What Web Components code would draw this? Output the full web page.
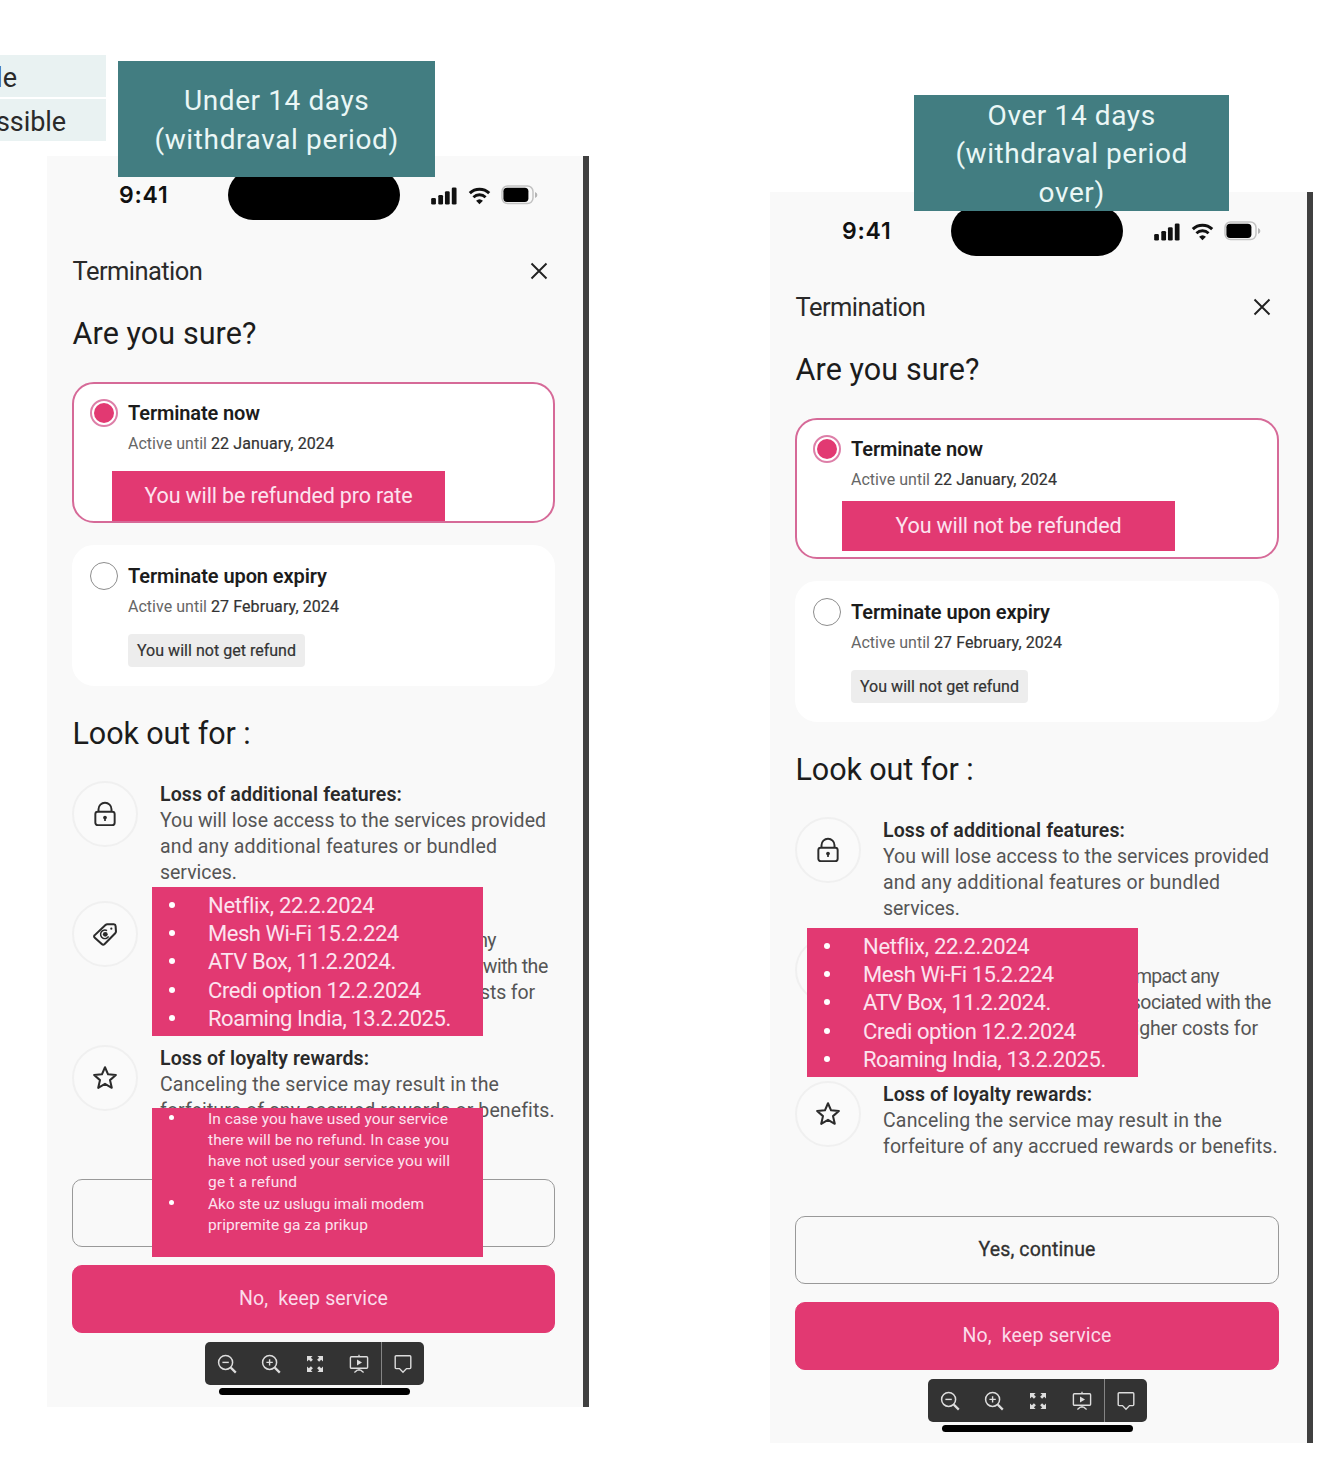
<!DOCTYPE html>
<html lang="en">
<head>
<meta charset="utf-8">
<title>Termination flow</title>
<style>
  html, body { margin: 0; background: #fff; }
  body { width: 1330px; height: 1464px; overflow: hidden; font-family: Roboto, "Liberation Sans", sans-serif; color: #222; }
</style>
</head>
<body>
<flow-board></flow-board>

<script>
const define = (name, html, setup) => {
  const tpl = document.createElement('template');
  tpl.innerHTML = html;
  customElements.define(name, class extends HTMLElement {
    constructor() {
      super();
      this.attachShadow({ mode: 'open' });
    }
    connectedCallback() {
      if (this.ready) return;
      this.ready = true;
      this.shadowRoot.append(document.importNode(tpl.content, true));
      if (setup) setup(this, this.shadowRoot);
    }
  });
};

/* One line of text tracked so that it fills the width in its "w" attribute. */
define('fit-line', `<style>:host { display: block; flex: none; } span { display: inline-block; vertical-align: top; white-space: pre; }</style><span><slot></slot></span>`, (el, root) => {
  const w = parseFloat(el.getAttribute('w'));
  const span = root.querySelector('span');
  const natural = span.getBoundingClientRect().width;
  const n = el.textContent.length;
  if (w && natural) {
    span.style.letterSpacing = ((w - natural) / (n - 0.5)).toFixed(3) + 'px';
    el.style.width = w + 'px';
  }
});

const ICONS = {
  close: ['0 0 20 20', '<path d="M2.5 2.5 17.5 17.5M17.5 2.5 2.5 17.5" stroke-width="1.9"/>'],
  lock: ['0 0 24 28', '<rect x="1.600" y="11.500" width="20.800" height="14.500" rx="2.600" stroke-width="2.100"/><path d="M5 11.500V8.800a7 7 0 0 1 14 0v2.700" stroke-width="2.100"/><circle cx="12" cy="17.800" r="2" fill="currentColor" stroke="none"/><path d="M12 18v3.600" stroke-width="1.800"/>'],
  tag: ['0 0 28 28', '<path d="M3 15.200 14.500 4.200q.9-.8 2-.8l7 .2q1.800.1 1.900 1.800l.4 5.800q0 1.100-.8 1.900L13.600 24.800q-1.600 1.500-3.100 0L3 18q-1.500-1.400 0-2.800z" stroke-width="2.200"/><path d="M16.200 10.400a4.600 4.600 0 1 0 1.700 6.200" stroke-width="1.600"/><circle cx="14.300" cy="14.400" r="2.600" fill="currentColor" stroke="none"/><circle cx="20.800" cy="8.300" r="1.200" fill="currentColor" stroke="none"/>'],
  star: ['0 0 28 28', '<path d="m14 2.400 3.300 7.600 8.400.8-6.300 5.500 1.900 8.300-7.300-4.400-7.300 4.400 1.900-8.300-6.300-5.500 8.400-.8z" stroke-width="2.200" stroke-linejoin="round"/>'],
  zoomout: ['0 0 20 20', '<circle cx="8.600" cy="8.400" r="7" stroke-width="1.500"/><path d="M5.400 8.400h6.400" stroke-width="1.400"/><path d="m13.800 13.600 5 5" stroke-width="2.200"/>'],
  zoomin: ['0 0 20 20', '<circle cx="8.600" cy="8.400" r="7" stroke-width="1.500"/><path d="M5.400 8.400h6.400M8.600 5.200v6.400" stroke-width="1.400"/><path d="m13.800 13.600 5 5" stroke-width="2.200"/>'],
  expand: ['0 0 20 20', '<g fill="currentColor" stroke="none"><path d="M2 2h5.600L5.900 3.700l2 2-2 2-2-2L2 7.400z"/><path d="M18 2v5.400l-1.800-1.700-2.100 2-2-2 2.100-2L12.400 2z"/><path d="M2 18v-5.400l1.900 1.700 2-2 2 2-2 2L7.600 18z"/><path d="M18 18h-5.600l1.800-1.700-2.100-2 2-2 2.100 2 1.800-1.700z"/></g>'],
  present: ['0 0 20 20', '<rect x="1.400" y="2.800" width="17.200" height="11.400" rx="1" stroke-width="1.400"/><path d="M10 .8v2M10 14.200v2M5.400 18.600l2.800-2.400h3.600l2.800 2.400" stroke-width="1.300"/><path d="m8 5.600 5 3-5 3z" fill="currentColor" stroke="none"/>'],
  comment: ['0 0 20 20', '<path d="M3.200 1.800h13.600q1 0 1 1v10.800q0 1-1 1h-3.300L10 18.300l-3.500-3.700H3.200q-1 0-1-1V2.800q0-1 1-1z" stroke-width="1.400"/>'],
  signal: ['0 0 28 20', '<g fill="currentColor" stroke="none"><rect x="0.500" y="12.500" width="5" height="7" rx="1.400"/><rect x="8" y="9.500" width="5" height="10" rx="1.400"/><rect x="15" y="5.500" width="5" height="14" rx="1.400"/><rect x="22.200" y="1.500" width="5" height="18" rx="1.400"/></g>'],
  wifi: ['0 0 24 20', '<path d="M1.800 7.400a14.800 14.800 0 0 1 20.400 0" stroke-width="3.200"/><path d="M5.600 11.800a9.200 9.200 0 0 1 12.800 0" stroke-width="2.900"/><path d="M12 19.300 8.400 15.500a5.300 5.300 0 0 1 7.200 0z" fill="currentColor" stroke="none"/>'],
  battery: ['0 0 37 20', '<rect x="1" y="1" width="31" height="17.600" rx="5.500" stroke="#c2c2c2" stroke-width="1.500"/><rect x="2.400" y="2.700" width="25" height="14.200" rx="3.600" fill="currentColor" stroke="none"/><path d="M34 7v6q2.400-1 2.400-3T34 7z" fill="#b5b5b5" stroke="none"/>']
};
define('ui-icon', `<style>:host{display:block;flex:none}svg{display:block;width:100%;height:100%;fill:none;stroke:currentColor}</style>`, (el, root) => {
  const [box, body] = ICONS[el.getAttribute('name')];
  const t = document.createElement('template');
  t.innerHTML = `<svg viewBox="${box}" aria-hidden="true">${body}</svg>`;
  root.append(t.content);
});

define('status-bar', `
<style>
  :host { display: flex; height: 78px; align-items: center; color: #111; }
  .time { margin-left: 72px; width: 109px; font: 600 23px/28px Inter, sans-serif; }
  .island { width: 172px; height: 50px; border-radius: 25px; background: #000; }
  .icons { margin-left: 30px; display: flex; align-items: center; }
  .s { width: 28px; height: 19px; } .w { width: 25px; height: 19px; margin-left: 9px; } .b { width: 37px; height: 20px; margin-left: 9px; color: #000; }
</style>
<div class="time"><fit-line w="49">9:41</fit-line></div><div class="island"></div>
<div class="icons"><ui-icon class="s" name="signal"></ui-icon><ui-icon class="w" name="wifi"></ui-icon><ui-icon class="b" name="battery"></ui-icon></div>`);

define('option-card', `
<style>
  :host { display: flex; box-sizing: border-box; height: 141px; padding: 15px 15px 0 16px; border: 2px solid #fff; border-radius: 22px; background: #fff; }
  :host([checked]) { border-color: #d66a98; }
  .radio { flex: none; box-sizing: border-box; width: 28px; height: 28px; border: 1.500px solid #8d8d8d; border-radius: 50%; display: grid; place-items: center; }
  :host([checked]) .radio { border: 2px solid #dd7fa8; }
  :host([checked]) .radio::after { content: ""; width: 20px; height: 20px; border-radius: 50%; background: #e23972; }
  .body { margin-left: 10px; display: flex; flex-direction: column; align-items: flex-start; }
  .title { font: 600 20px/28px Roboto, sans-serif; color: #1c1c1c; }
  .sub { display: flex; gap: 4px; margin-top: 5px; font: 400 16px/24px Roboto, sans-serif; color: #666; }
  .date { color: #333; -webkit-text-stroke: .2px #333; }
</style>
<div class="radio"></div>
<div class="body"><div class="title"><slot name="title"></slot></div>
<div class="sub"><fit-line w="79">Active until</fit-line><span class="date"><slot name="date"></slot></span></div><slot></slot></div>`);

define('info-chip', `
<style>:host { display: block; box-sizing: border-box; height: 33px; width: 177px; padding-left: 9px; margin-top: 15px; border-radius: 4px; background: #ededed; font: 400 16px/34px Roboto, sans-serif; color: #333; -webkit-text-stroke: .2px #333; }</style><slot></slot>`);

define('feature-row', `
<style>
  :host { display: flex; width: 483px; }
  .disc { flex: none; box-sizing: border-box; width: 66px; height: 66px; border: 2px solid #f0f0f0; border-radius: 50%; display: grid; place-items: center; color: #2b2b2b; background: #fafafa; }
  ui-icon { width: 26px; height: 26px; }
  .text { margin-left: 22px; padding-top: 1px; display: flex; flex-direction: column; align-items: flex-start; font: 400 19.500px/26px Roboto, sans-serif; color: #555; white-space: nowrap; }
  .title { font-weight: 600; color: #2a2a2a; height: 26px; }
</style>
<div class="disc"></div><div class="text"><div class="title"><slot name="title"></slot></div><slot></slot></div>`, (el, root) => {
  const icon = document.createElement('ui-icon');
  icon.setAttribute('name', el.getAttribute('icon'));
  root.querySelector('.disc').append(icon);
});

define('action-button', `
<style>
  :host { display: flex; box-sizing: border-box; height: 68px; align-items: center; justify-content: center; border: 1.500px solid #999; border-radius: 10px; font: 400 19.500px/26px Roboto, sans-serif; color: #303030; -webkit-text-stroke: .3px currentColor; }
  :host([primary]) { background: #e23972; border-color: #e23972; color: #fbdcea; -webkit-text-stroke: 0; }
</style><slot></slot>`);

define('viewer-toolbar', `
<style>
  :host { display: flex; width: 219px; height: 43px; border-radius: 5px; background: #333; color: #ddd; }
  div { width: 44px; display: grid; place-items: center; }
  .last { box-sizing: border-box; width: 43px; border-left: 1px solid #858585; }
  ui-icon { width: 20px; height: 20px; }
</style>
<div><ui-icon name="zoomout"></ui-icon></div><div><ui-icon name="zoomin"></ui-icon></div><div><ui-icon name="expand"></ui-icon></div><div><ui-icon name="present"></ui-icon></div><div class="last"><ui-icon name="comment"></ui-icon></div>`);

/* Slide annotations that are laid over the screens. */
define('teal-label', `
<style>:host { position: absolute; z-index: 3; box-sizing: border-box; height: 116px; padding-top: 3px; display: flex; flex-direction: column; align-items: center; justify-content: center; background: #427d81; color: #eaf7f6; font: 400 28px/38.500px Roboto, sans-serif; }</style><slot></slot>`);
define('pink-note', `
<style>:host { position: absolute; z-index: 2; box-sizing: border-box; display: flex; flex-direction: column; background: #e23972; color: #fce3ef; font: 400 22px/28.200px Roboto, sans-serif; }
:host([center]) { width: 333px; height: 50px; align-items: center; justify-content: center; font-size: 21.500px; }
:host([list]) { width: 331px; height: 149px; padding-top: 5px; }
:host([small]) { padding-top: 1px; font-size: 15.500px; line-height: 21.150px; }
</style><slot></slot>`);
define('note-item', `
<style>:host { display: flex; padding-left: 17px; } i { width: 6px; height: 6px; flex: none; border-radius: 50%; background: #fff; margin: 10px 33px 0 0; }
:host([small]) i { width: 5px; height: 5px; margin: 6px 34px 0 0; }
div { display: flex; flex-direction: column; align-items: flex-start; }</style><i></i><div><slot></slot></div>`);

define('phone-screen', `
<style>
  :host { display: block; flex: none; position: relative; box-sizing: border-box; width: 542px; height: 1251px; background: #f9f9f9; border-right: 6px solid #404040; }
  .col { display: flex; flex-direction: column; padding-left: 25px; align-items: flex-start; }
  header { display: flex; justify-content: space-between; align-items: center; width: 477px; height: 36px; margin-top: 19px; font: 400 25.500px/36px Roboto, sans-serif; color: #2a2a2a; }
  header ui-icon { width: 20px; height: 20px; color: #222; }
  header fit-line, h2 fit-line { margin-left: .5px; }
  h2 { margin: 25px 0 0; font: 400 30.500px/40px Roboto, sans-serif; color: #1c1c1c; height: 40px; }
  .cards, .buttons { width: var(--col, 483px); }
  .cards { display: flex; flex-direction: column; gap: 22px; margin-top: 28px; }
  h2.look { margin-top: 28px; }
  .features { display: flex; flex-direction: column; gap: 15px; margin-top: 27px; height: 343px; }
  .mid { height: 130px; }
  .end { display: flex; justify-content: flex-end; height: 26px; }
  .buttons { display: flex; flex-direction: column; gap: 18px; margin-top: var(--actions-gap, 55px); }
  .foot { width: 484px; display: flex; flex-direction: column; align-items: center; margin-top: 9px; }
  .home { width: 191px; height: 7px; border-radius: 4px; background: #000; margin-top: 3px; }
  :host([covered]) .yes { display: none; }
</style>
<status-bar></status-bar>
<div class="col">
  <header><fit-line w="130">Termination</fit-line><ui-icon name="close"></ui-icon></header>
  <h2><fit-line w="184">Are you sure?</fit-line></h2>
  <div class="cards">
    <option-card checked><fit-line slot="title" w="132">Terminate now</fit-line><fit-line slot="date" w="123">22 January, 2024</fit-line></option-card>
    <option-card><fit-line slot="title" w="199">Terminate upon expiry</fit-line><fit-line slot="date" w="128">27 February, 2024</fit-line><info-chip><fit-line w="159">You will not get refund</fit-line></info-chip></option-card>
  </div>
  <h2 class="look"><fit-line w="178">Look out for :</fit-line></h2>
  <div class="features">
    <feature-row icon="lock"><fit-line slot="title" w="242">Loss of additional features:</fit-line><fit-line w="386">You will lose access to the services provided</fit-line><fit-line w="337">and any additional features or bundled</fit-line><fit-line w="77">services.</fit-line></feature-row>
    <feature-row icon="tag" class="mid"><div class="end" style="width:336px"><fit-line w="88">impact any</fit-line></div><div class="end" style="width:388px"><fit-line w="160">associated with the</fit-line></div><div class="end" style="width:375px"><fit-line w="134">higher costs for</fit-line></div></feature-row>
    <feature-row icon="star"><fit-line slot="title" w="209">Loss of loyalty rewards:</fit-line><fit-line w="339">Canceling the service may result in the</fit-line><fit-line w="394">forfeiture of any accrued rewards or benefits.</fit-line></feature-row>
  </div>
  <div class="buttons">
    <action-button><fit-line class="yes" w="117">Yes, continue</fit-line></action-button>
    <action-button primary><fit-line w="149">No,  keep service</fit-line></action-button>
  </div>
  <div class="foot"><viewer-toolbar></viewer-toolbar><div class="home"></div></div>
</div>
<slot></slot>`);

const list = `
  <note-item><fit-line w="166">Netflix, 22.2.2024</fit-line></note-item>
  <note-item><fit-line w="191">Mesh Wi-Fi 15.2.224</fit-line></note-item>
  <note-item><fit-line w="188">ATV Box, 11.2.2024.</fit-line></note-item>
  <note-item><fit-line w="213">Credi option 12.2.2024</fit-line></note-item>
  <note-item><fit-line w="243">Roaming India, 13.2.2025.</fit-line></note-item>`;

define('flow-board', `
<style>
  :host { display: flex; position: relative; width: 1330px; height: 1464px; overflow: hidden; align-items: flex-start; }
  .tags { position: absolute; left: 0; top: 55px; width: 106px; display: flex; flex-direction: column; gap: 2px; overflow: hidden; }
  .tags div { box-sizing: border-box; display: flex; justify-content: flex-end; height: 42px; background: #e9f2f2; font: 400 27px/46px Roboto, sans-serif; color: #2a2a2a; }
  .a { margin: 156px 0 0 47px; } .b { margin: 192px 0 0 181px; width: 543px; --actions-gap: 56px; --col: 484px; }
</style>
<div class="tags"><div style="padding-right:89px"><fit-line w="21">le</fit-line></div><div style="padding-right:40px"><fit-line w="70">ssible</fit-line></div></div>
<phone-screen class="a" covered>
  <teal-label style="left:71px;top:-95px;width:317px"><fit-line w="185">Under 14 days</fit-line><fit-line w="244">(withdraval period)</fit-line></teal-label>
  <pink-note center style="left:65px;top:315px"><fit-line w="268">You will be refunded pro rate</fit-line></pink-note>
  <pink-note list style="left:105px;top:731px">${list}</pink-note>
  <pink-note list small style="left:105px;top:952px">
    <note-item small><fit-line w="240">In case you have used your service</fit-line><fit-line w="241">there will be no refund. In case you</fit-line><fit-line w="242">have not used your service you will</fit-line><fit-line w="89">ge t a refund</fit-line></note-item>
    <note-item small><fit-line w="216">Ako ste uz uslugu imali modem</fit-line><fit-line w="160">pripremite ga za prikup</fit-line></note-item>
  </pink-note>
</phone-screen>
<phone-screen class="b">
  <teal-label style="left:144px;top:-97px;width:315px"><fit-line w="168">Over 14 days</fit-line><fit-line w="232">(withdraval period</fit-line><fit-line w="66">over)</fit-line></teal-label>
  <pink-note center style="left:72px;top:309px"><fit-line w="226">You will not be refunded</fit-line></pink-note>
  <pink-note list style="left:37px;top:736px">${list}</pink-note>
</phone-screen>`);
</script>
</body>
</html>
